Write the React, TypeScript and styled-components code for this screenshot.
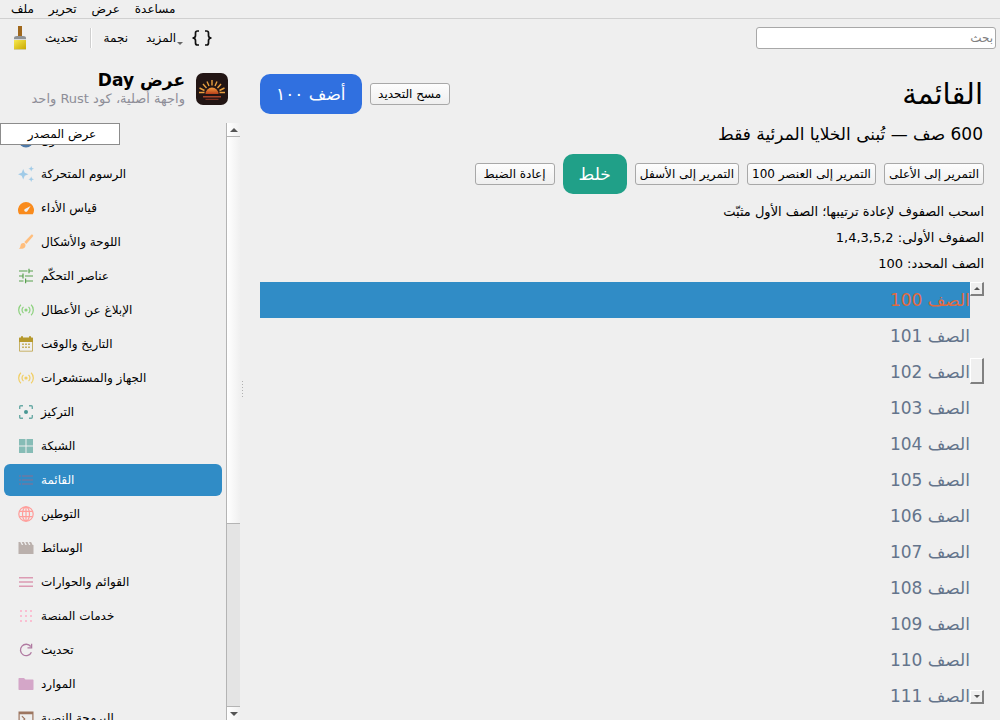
import React from 'react';
import styled, { createGlobalStyle } from 'styled-components';

const GlobalStyle = createGlobalStyle`
  * { box-sizing: border-box; }
  body {
    margin: 0;
    background: #efefef;
    color: #000;
    font: 12px/16px "DejaVu Sans", sans-serif;
    overflow: hidden;
  }
  button, input { font: inherit; color: inherit; }
`;

const Window = styled.div`
  display: flex;
  flex-direction: column;
  height: 100vh;
`;

const MenuBar = styled.nav`
  display: flex;
  gap: 15px;
  height: 19px;
  padding: 0 11px;
  border-bottom: 1px solid #d0d0d0;
`;

const PlainButton = styled.button`
  display: flex;
  align-items: center;
  border: 0;
  padding: 0;
  background: none;
  white-space: nowrap;
`;

const ToolBar = styled.div`
  display: flex;
  align-items: center;
  height: 38px;
  padding: 0 4px 0 12px;
`;

const ToolGroup = styled.div`
  display: flex;
  align-items: center;
  flex: 1;
`;

const ToolButton = styled(PlainButton)<{ $gap: number }>`
  margin-right: ${p => p.$gap}px;
`;

const Separator = styled.span`
  width: 2px;
  height: 20px;
  margin-right: 12px;
  border-left: 1px solid #cfcfcf;
  border-right: 1px solid #fff;
`;

const SearchBox = styled.input`
  width: 240px;
  height: 22px;
  padding: 0 2px;
  border: 1px solid #a8a8a8;
  border-radius: 3px;
  background: #fff;
  &::placeholder { color: #808080; opacity: 1; }
`;

const Body = styled.div`
  display: flex;
  flex: 1;
  min-height: 0;
`;

const Sidebar = styled.aside`
  display: flex;
  flex-direction: column;
  width: 240px;
`;

const Brand = styled.header`
  display: flex;
  justify-content: flex-end;
  gap: 11px;
  height: 66px;
  padding: 13px 12px 0 0;
`;

const BrandName = styled.h2`
  margin: 0;
  font-size: 17px;
  line-height: 20px;
`;

const BrandNote = styled.p`
  margin: 0;
  font-size: 13px;
  line-height: 17px;
  color: #8e8e98;
`;

const Logo = styled.svg`
  margin-top: 3px;
`;

const NavFrame = styled.div`
  position: relative;
  display: flex;
  flex: 1;
  min-height: 0;
`;

const NavList = styled.ul`
  display: flex;
  flex-direction: column;
  gap: 2px;
  flex: 1;
  margin: 0;
  padding: 1px 4px 0;
  list-style: none;
  overflow: hidden;
`;

const NavItem = styled(PlainButton)<{ $selected: boolean }>`
  gap: 7px;
  width: 100%;
  height: 32px;
  padding: 0 14px;
  border-radius: 6px;
  background: ${p => (p.$selected ? '#308cc6' : 'none')};
  color: ${p => (p.$selected ? '#fff' : '#000')};
`;

const SourceTip = styled.button`
  position: absolute;
  top: 0;
  left: 0;
  width: 120px;
  height: 22px;
  padding: 0 0 0 4px;
  border: 1px solid #8c8c8c;
  background: #fff;
`;

const NavScroll = styled.div`
  display: flex;
  flex-direction: column;
  width: 14px;
  border-left: 1px solid #b4b4b4;
  background: #e4e4e4;
`;

const NavScrollEnd = styled(PlainButton)`
  justify-content: center;
  height: 13px;
  background: linear-gradient(90deg, #fff, #f0f0f0);
`;

const NavScrollThumb = styled.div`
  height: 388px;
  border: solid #b4b4b4;
  border-width: 1px 0;
  background: linear-gradient(90deg, #fff, #f0f0f0);
`;

const NavScrollTrack = styled.div`
  flex: 1;
  border-bottom: 1px solid #b4b4b4;
`;

const Spacer = styled.div`
  flex: 1;
`;

const Splitter = styled.div`
  display: flex;
  flex-direction: column;
  justify-content: center;
  width: 4px;
`;

const Main = styled.main`
  display: flex;
  flex-direction: column;
  flex: 1;
  min-width: 0;
  padding: 17px 16px 16px;
`;

const Row = styled.div`
  display: flex;
  align-items: center;
  gap: 8px;
  height: 40px;
`;

const Title = styled.h1`
  margin: 0;
  padding-right: 1px;
  font-size: 29px;
  font-weight: 400;
  line-height: 36px;
`;

const Subtitle = styled.p`
  margin: 0;
  padding-right: 1px;
  height: 40px;
  font-size: 17px;
  line-height: 40px;
`;

const Note = styled.p`
  margin: 0;
  font-size: 13px;
  line-height: 26px;
`;

const Notes = styled.div`
  padding: 5px 0;
`;

const Button = styled.button`
  min-width: 80px;
  height: 22px;
  padding: 0 4px;
  border: 1px solid #a8a8a8;
  border-radius: 3px;
  background: linear-gradient(#fdfdfd, #efefef);
  white-space: nowrap;
`;

const BigButton = styled.button<{ $color: string }>`
  height: 40px;
  padding: 0 16px;
  border: 0;
  border-radius: 10px;
  background: ${p => p.$color};
  color: #fff;
  font-size: 17px;
  white-space: nowrap;
`;

const ListFrame = styled.div`
  display: flex;
  flex: 1;
  min-height: 0;
`;

const List = styled.ul`
  flex: 1;
  margin: 0;
  padding: 0;
  list-style: none;
  overflow: hidden;
`;

const ListRow = styled.li<{ $selected: boolean }>`
  height: 36px;
  font-size: 17px;
  line-height: 36px;
  background: ${p => (p.$selected ? '#308cc6' : 'none')};
  color: ${p => (p.$selected ? '#e06a40' : '#64748b')};
`;

const ListScroll = styled.div`
  display: flex;
  flex-direction: column;
  width: 14px;
`;

const Bevel = styled.button<{ $height: number }>`
  display: flex;
  align-items: center;
  justify-content: center;
  height: ${p => p.$height}px;
  padding: 0;
  border: solid;
  border-width: 1px 2px 2px 1px;
  border-color: #fff #808080 #808080 #fff;
  background: #efefef;
`;

const TrackGap = styled.div`
  height: 62px;
`;

const Arrow = ({ down = false, w = 8 }: { down?: boolean; w?: number }) => (
  <svg width={w} height={w / 2} viewBox="0 0 8 4" fill="#555">
    <path d={down ? 'M0 0h8L4 4z' : 'M0 4h8L4 0z'} />
  </svg>
);

const signal = (
  <g fill="none" stroke="currentColor" strokeWidth="1.2">
    <circle cx="8" cy="8" r="1" fill="currentColor" />
    <path d="M5.5 4.9a4 4 0 0 0 0 6.2M10.5 4.9a4 4 0 0 1 0 6.2M2.9 2.8a7.2 7.2 0 0 0 0 10.4M13.1 2.8a7.2 7.2 0 0 1 0 10.4" />
  </g>
);

const glyphs: Record<string, React.ReactNode> = {
  about: <circle cx="8" cy="8" r="7.5" />,
  sparkle: <path d="M5.200 3 6.700 6.700 10.400 8.200 6.700 9.700 5.200 13.400 3.700 9.700 0 8.200 3.700 6.700zM13.200 0l.8 1.900 2 .8-2 .8-.8 1.900-.8-1.900-2-.8 2-.8zM13.200 10.600l.8 1.900 2 .8-2 .8-.8 1.900-.8-1.900-2-.8 2-.8z" />,
  gauge: <path fillRule="evenodd" d="M1.200 14.200A8 8 0 1 1 14.800 14.200zM6.700 11.300c.8.8 2 .7 2.600-.1L12.600 6 7 9c-.9.600-1 1.600-.3 2.300z" />,
  brush: <path d="M14.600.8c.7.500.8 1.200.3 1.800L8.300 9.900 6.300 8 13 1c.5-.5 1.100-.6 1.600-.2zM5.500 9c1.500.2 2.400 1.500 1.900 3.200-.6 2.200-3.500 3-6.600 2.400 1.500-.8 1.400-1.800 1.800-3.300C3 9.700 4.200 8.800 5.500 9z" />,
  tune: <path d="M1 2.500h8.500v1H1zM10.400.8h1.200v1.700H15v1h-3.400v1.700h-1.200zM4.400 5.500h1.200v5H4.400v-2H1v-1h3.400zM7 7.500h8v1H7zM1 12.500h4.500v1H1zM7 10.500h1.200v2H15v1H8.200v1.800H7z" />,
  signal,
  calendar: (
    <g>
      <path d="M1.500 5.500h13v9.700h-13z" fill="none" stroke="currentColor" opacity=".7" />
      <path d="M3 .2h2v1.300h6V.2h2v1.300h1.500l.5.500v4H1V2l.5-.5H3z" />
      <path d="M4 7.500h2V9H4zm3 0h2V9H7zm3 0h2V9h-2zM4 10.500h2V12H4zm3 0h2V12H7zm3 0h2V12h-2z" opacity=".7" />
    </g>
  ),
  focus: <g><circle cx="8" cy="8" r="2" /><path d="M1.700 5V2.700a1 1 0 0 1 1-1H5M11 1.700h2.300a1 1 0 0 1 1 1V5M14.300 11v2.300a1 1 0 0 1-1 1H11M5 14.300H2.700a1 1 0 0 1-1-1V11" fill="none" stroke="currentColor" strokeWidth="1.400" opacity=".8" /></g>,
  grid: <path d="M1 1h6.500v6.500H1zM8.500 1H15v6.500H8.500zM1 8.500h6.500V15H1zM8.500 8.500H15V15H8.500z" />,
  list: <path d="M1 3.500h2v1H1zM4 3.500h11v1H4zM1 7.500h2v1H1zM4 7.500h11v1H4zM1 11.500h2v1H1zM4 11.500h11v1H4z" />,
  globe: <g fill="none" stroke="currentColor" strokeWidth="1.200"><circle cx="8" cy="8" r="7.200" /><ellipse cx="8" cy="8" rx="3.500" ry="7.200" /><path d="M1.500 5.300h13M1.500 10.700h13M8 1v14" /></g>,
  clapper: <path d="M.5 2h1.800l1.500 3h1.400L3.800 2h2.100l1.500 3h1.400L7.400 2h2.100L11 5h1.400L11 2h2.100l1.500 3h.9v9H.5z" />,
  menu: <path d="M1 3h14v1.500H1zM1 7.300h14v1.500H1zM1 11.600h14v1.500H1z" />,
  dots: <path d="M2 2h2v2H2zM7 2h2v2H7zM12 2h2v2h-2zM2 7h2v2H2zM7 7h2v2H7zM12 7h2v2h-2zM2 12h2v2H2zM7 12h2v2H7zM12 12h2v2h-2z" />,
  refresh: <path d="M13.400 10.200a5.700 5.700 0 1 1-.7-5.700M13.600 1.800v4H9.500" fill="none" stroke="currentColor" strokeWidth="1.300" />,
  folder: <path d="M1 2h5l1.500 1.500H15l.5.5v9.500l-.5.5H1l-.5-.5v-11z" />,
  terminal: <path fillRule="evenodd" d="M.5 1.500h15v13H.5zM1.700 4.200v9h12.600v-9zM3.500 6.500l.8-.8L7.600 9l-3.300 3.300-.8-.8L6 9zM8.500 11H12v1.200H8.500z" />,
};

const Glyph = ({ name, color }: { name: string; color: string }) => (
  <svg width="16" height="16" viewBox="0 0 16 16" fill="currentColor" color={color} aria-hidden="true">
    {glyphs[name]}
  </svg>
);

const navItems: [string, string, string][] = [
  ['حول', 'about', '#4e79a7'],
  ['الرسوم المتحركة', 'sparkle', '#a0cbe8'],
  ['قياس الأداء', 'gauge', '#f98b1d'],
  ['اللوحة والأشكال', 'brush', '#ffbe7d'],
  ['عناصر التحكّم', 'tune', '#59a14f'],
  ['الإبلاغ عن الأعطال', 'signal', '#8cd17d'],
  ['التاريخ والوقت', 'calendar', '#b6992d'],
  ['الجهاز والمستشعرات', 'signal', '#f1ce63'],
  ['التركيز', 'focus', '#499894'],
  ['الشبكة', 'grid', '#86bcb6'],
  ['القائمة', 'list', '#8a6f90'],
  ['التوطين', 'globe', '#ff9d9a'],
  ['الوسائط', 'clapper', '#bab0ac'],
  ['القوائم والحوارات', 'menu', '#dc9bb3'],
  ['خدمات المنصة', 'dots', '#fabfd2'],
  ['تحديث', 'refresh', '#b07aa1'],
  ['الموارد', 'folder', '#d4a6c8'],
  ['البرمجة النصية', 'terminal', '#9d7660'],
];

const rows = Array.from({ length: 12 }, (_, i) => 100 + i);

const Paintbrush = () => (
  <svg width="16" height="26" viewBox="0 0 16 26">
    <defs>
      <linearGradient id="bristle" x2="1" y2="1">
        <stop stopColor="#f8ea50" />
        <stop offset="1" stopColor="#c9a800" />
      </linearGradient>
    </defs>
    <path d="M6 1h4v11H6z" fill="#a0681c" />
    <path d="M2 13q0-2 3-2h6q3 0 3 2v2H2z" fill="#8f9396" />
    <path d="M2 14h12v1H2z" fill="#d8dadb" />
    <path d="M2 15h12v9H2z" fill="url(#bristle)" />
    <path d="M2 24h12v1H2z" fill="#d3cd9d" />
  </svg>
);

const SunLogo = () => (
  <Logo width="32" height="32" viewBox="0 0 32 32">
    <defs>
      <linearGradient id="sun" x2="0" y2="1">
        <stop stopColor="#f29a3a" />
        <stop offset="1" stopColor="#b8401c" />
      </linearGradient>
    </defs>
    <rect width="32" height="32" rx="7" fill="#221514" />
    <path d="M16 7v5.500M11 8.500l2 4.500M21 8.500L19 13M7 11l3.500 4M25 11L21.500 15M3.500 15l5 2.500M28.500 15l-5 2.500M3 19.500h5.500M29 19.500h-5.500" stroke="#e8a040" strokeWidth="1.400" />
    <path d="M9.500 21a6.500 6.500 0 0 1 13 0z" fill="url(#sun)" />
    <path d="M7 23h18v1.500H7z" fill="#a8452a" />
    <path d="M9.500 25.800h13v1.200h-13z" fill="#7d3020" />
  </Logo>
);

export default function App() {
  return (
    <Window>
      <GlobalStyle />
      <MenuBar>
        {['ملف', 'تحرير', 'عرض', 'مساعدة'].map(label => (
          <PlainButton key={label}>{label}</PlainButton>
        ))}
      </MenuBar>
      <ToolBar>
        <ToolGroup>
          <ToolButton $gap={17} aria-label="فرشاة"><Paintbrush /></ToolButton>
          <ToolButton $gap={12}>تحديث</ToolButton>
          <Separator />
          <ToolButton $gap={18}>نجمة</ToolButton>
          <ToolButton $gap={8}>
            المزيد
            <svg width="7" height="16" viewBox="0 0 7 16" fill="#666"><path d="M1 12h6L4 15z" /></svg>
          </ToolButton>
          <ToolButton $gap={0} aria-label="المصدر">
            <svg width="22" height="18" viewBox="0 0 22 18" fill="none" stroke="#111" strokeWidth="1.700">
              <path d="M8 2H6.500Q4.500 2 4.500 4v2.500Q4.500 9 1.500 9q3 0 3 2.500V14q0 2 2 2H8M14 2h1.500q2 0 2 2v2.500q0 2.500 3 2.500-3 0-3 2.500V14q0 2-2 2H14" />
            </svg>
          </ToolButton>
        </ToolGroup>
        <SearchBox type="search" dir="rtl" placeholder="بحث" aria-label="بحث" />
      </ToolBar>
      <Body>
        <Sidebar>
          <Brand>
            <div dir="rtl">
              <BrandName>عرض Day</BrandName>
              <BrandNote>واجهة أصلية، كود Rust واحد</BrandNote>
            </div>
            <SunLogo />
          </Brand>
          <NavFrame>
            <NavList>
              {navItems.map(([label, icon, color]) => (
                <li key={label}>
                  <NavItem $selected={icon === 'list'}>
                    <Glyph name={icon} color={color} />
                    {label}
                  </NavItem>
                </li>
              ))}
            </NavList>
            <NavScroll>
              <NavScrollEnd aria-label="أعلى"><Arrow /></NavScrollEnd>
              <NavScrollThumb />
              <NavScrollTrack />
              <NavScrollEnd aria-label="أسفل"><Arrow down /></NavScrollEnd>
            </NavScroll>
            <SourceTip>عرض المصدر</SourceTip>
          </NavFrame>
        </Sidebar>
        <Splitter>
          <svg width="4" height="18" viewBox="0 0 4 18" fill="#b0b0b0">
            <path d="M2 1h1v1H2zM2 4h1v1H2zM2 7h1v1H2zM2 10h1v1H2zM2 13h1v1H2zM2 16h1v1H2z" />
          </svg>
        </Splitter>
        <Main dir="rtl">
          <Row>
            <Title>القائمة</Title>
            <Spacer />
            <Button>مسح التحديد</Button>
            <BigButton $color="#3070e0">أضف ١٠٠</BigButton>
          </Row>
          <Subtitle>600 صف — تُبنى الخلايا المرئية فقط</Subtitle>
          <Row>
            <Button>التمرير إلى الأعلى</Button>
            <Button>التمرير إلى العنصر 100</Button>
            <Button>التمرير إلى الأسفل</Button>
            <BigButton $color="#20a088">خلط</BigButton>
            <Button>إعادة الضبط</Button>
          </Row>
          <Notes>
            <Note>اسحب الصفوف لإعادة ترتيبها؛ الصف الأول مثبّت</Note>
            <Note>الصفوف الأولى: <bdi dir="ltr">1,4,3,5,2</bdi></Note>
            <Note>الصف المحدد: 100</Note>
          </Notes>
          <ListFrame>
            <ListScroll>
              <Bevel $height={14} aria-label="أعلى"><Arrow w={6} /></Bevel>
              <TrackGap />
              <Bevel $height={26} aria-label="موضع التمرير" />
              <Spacer />
              <Bevel $height={14} aria-label="أسفل"><Arrow down w={6} /></Bevel>
            </ListScroll>
            <List>
              {rows.map(n => (
                <ListRow key={n} $selected={n === 100}>الصف {n}</ListRow>
              ))}
            </List>
          </ListFrame>
        </Main>
      </Body>
    </Window>
  );
}
